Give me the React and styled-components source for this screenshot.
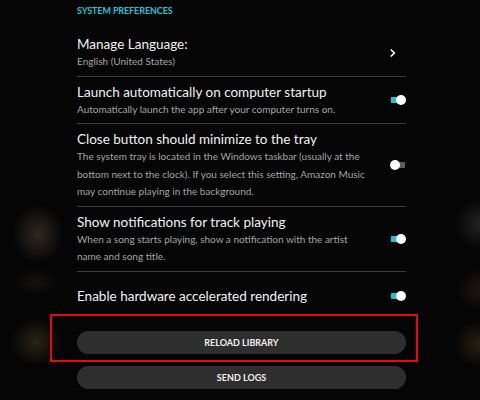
import styled, { createGlobalStyle } from "styled-components";

const GlobalStyle = createGlobalStyle`
  html, body {
    margin: 0;
    padding: 0;
    height: 100%;
  }
  body {
    background-color: #050505;
    background-image:
      radial-gradient(ellipse 26px 30px at 38px 234px, rgba(66, 54, 48, 0.7), transparent),
      radial-gradient(ellipse 22px 14px at 36px 282px, rgba(38, 32, 28, 0.55), transparent),
      radial-gradient(ellipse 26px 24px at 36px 342px, rgba(60, 52, 28, 0.65), transparent),
      radial-gradient(ellipse 26px 26px at 480px 224px, rgba(52, 52, 52, 0.65), transparent),
      radial-gradient(ellipse 24px 22px at 480px 290px, rgba(46, 30, 24, 0.65), transparent),
      radial-gradient(ellipse 26px 24px at 480px 344px, rgba(60, 48, 28, 0.65), transparent);
    font-family: "Lato", "Open Sans", sans-serif;
    color: #fff;
  }
`;

const Panel = styled.div`
  width: 329px;
  margin-left: 77px;
  display: flex;
  flex-direction: column;
`;

const SectionTitle = styled.h2`
  margin: 2px 0 9px;
  font-size: 9px;
  line-height: 18px;
  font-weight: 700;
  letter-spacing: -0.1px;
  color: #22c4d6;
`;

const Row = styled.div`
  display: flex;
  align-items: center;
  gap: 12px;
  padding: ${(p) => (p.$single ? "15px 0" : "6px 0 5px")};
  border-bottom: ${(p) => (p.$last ? "none" : "1px solid #3c3c3c")};
`;

const RowText = styled.div`
  flex: 1;
  display: flex;
  flex-direction: column;
`;

const RowTitle = styled.div`
  font-size: 13.5px;
  line-height: 18px;
  font-weight: 400;
  color: #f2f2f2;
`;

const RowSub = styled.div`
  max-width: 290px;
  font-size: 10px;
  line-height: 17.5px;
  color: #a4a4a4;
`;

const Toggle = styled.div`
  width: 16px;
  height: 10px;
  flex-shrink: 0;
  display: flex;
  align-items: center;
  justify-content: ${(p) => (p.$on ? "flex-end" : "flex-start")};
  background: linear-gradient(
    to right,
    transparent 0,
    transparent 1px,
    ${(p) => (p.$on ? "#1fc2d4" : "#5c5c5c")} 1px,
    ${(p) => (p.$on ? "#1fc2d4" : "#5c5c5c")} 15px,
    transparent 15px
  );
  background-size: 100% 6px;
  background-position: center;
  background-repeat: no-repeat;
`;

const Knob = styled.span`
  width: 10px;
  height: 10px;
  border-radius: 50%;
  background: #ffffff;
`;

const Chevron = styled.svg`
  width: 16px;
  height: 10px;
  flex-shrink: 0;
`;

const Actions = styled.div`
  display: flex;
  flex-direction: column;
  gap: 12px;
  margin-top: 11px;
`;

const ActionWrap = styled.div`
  position: relative;
`;

const Highlight = styled.div`
  position: absolute;
  top: -17px;
  bottom: -8px;
  left: -27px;
  right: -12px;
  border: 2px solid #e8080e;
  pointer-events: none;
`;

const PillButton = styled.button`
  display: block;
  width: 100%;
  height: 23px;
  border: none;
  border-radius: 12px;
  background: #2e2e2e;
  color: #f0f0f0;
  font-family: "Lato", "Open Sans", sans-serif;
  font-size: 9px;
  font-weight: 700;
  cursor: pointer;
`;

const settings = [
  {
    title: "Launch automatically on computer startup",
    sub: "Automatically launch the app after your computer turns on.",
    on: true,
  },
  {
    title: "Close button should minimize to the tray",
    sub: "The system tray is located in the Windows taskbar (usually at the bottom next to the clock). If you select this setting, Amazon Music may continue playing in the background.",
    on: false,
  },
  {
    title: "Show notifications for track playing",
    sub: "When a song starts playing, show a notification with the artist name and song title.",
    on: true,
  },
];

function Switch({ on }) {
  return (
    <Toggle $on={on}>
      <Knob />
    </Toggle>
  );
}

export default function App() {
  return (
    <>
      <GlobalStyle />
      <Panel>
        <SectionTitle>SYSTEM PREFERENCES</SectionTitle>
        <Row>
          <RowText>
            <RowTitle>Manage Language:</RowTitle>
            <RowSub>English (United States)</RowSub>
          </RowText>
          <Chevron viewBox="0 0 16 10">
            <path d="M0.8 1.5 L4.3 5 L0.8 8.5" fill="none" stroke="#fff" strokeWidth="1.6" />
          </Chevron>
        </Row>
        {settings.map((s) => (
          <Row key={s.title}>
            <RowText>
              <RowTitle>{s.title}</RowTitle>
              <RowSub>{s.sub}</RowSub>
            </RowText>
            <Switch on={s.on} />
          </Row>
        ))}
        <Row $single $last>
          <RowText>
            <RowTitle>Enable hardware accelerated rendering</RowTitle>
          </RowText>
          <Switch on />
        </Row>
        <Actions>
          <ActionWrap>
            <Highlight />
            <PillButton>RELOAD LIBRARY</PillButton>
          </ActionWrap>
          <PillButton>SEND LOGS</PillButton>
        </Actions>
      </Panel>
    </>
  );
}
